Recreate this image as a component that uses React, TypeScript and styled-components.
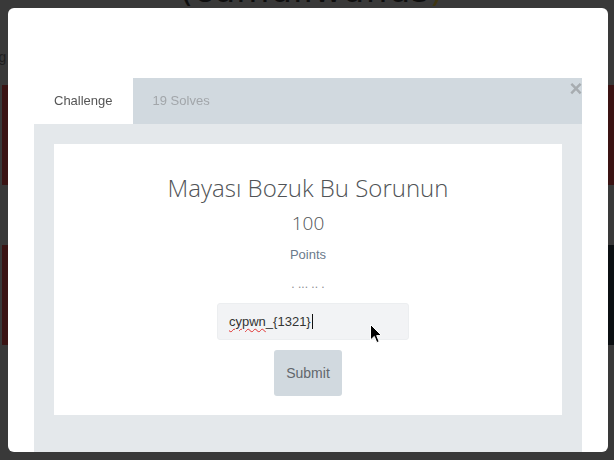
import React from "react";
import styled, { createGlobalStyle } from "styled-components";

const Global = createGlobalStyle`
  html, body { margin: 0; padding: 0; }
  body {
    background: #393939;
    width: 614px;
    height: 460px;
    overflow: hidden;
    font-family: "Liberation Sans", Arial, sans-serif;
  }
`;

/* ---------- backdrop page (already dimmed by the modal overlay) ---------- */
const Page = styled.div`
  display: flex;
  flex-direction: column;
  height: 460px;
  padding-left: 2px;
`;

const LogoBar = styled.div`
  height: 8px;
  overflow: hidden;
  display: flex;
  justify-content: center;
`;

const Logo = styled.div`
  margin-top: -27px;
  margin-left: 8px;
  font-family: "DejaVu Sans", sans-serif;
  font-size: 34px;
  line-height: 34px;
  letter-spacing: 1px;
  color: #0e0e0e;
  & > b {
    color: #3f3510;
    font-weight: 400;
  }
`;

const Nav = styled.div`
  height: 77px;
  box-sizing: border-box;
  padding-top: 41px;
  font-size: 14px;
  line-height: 16px;
  color: #1e1e1e;
  margin-left: -44px;
`;

const CardRow = styled.div<{ $gapTop: number }>`
  display: grid;
  grid-template-columns: 1fr 1fr;
  gap: 8px;
  height: 100px;
  margin-top: ${(p) => p.$gapTop}px;
`;

const Card = styled.div<{ $tone: "red" | "dark" }>`
  background: ${(p) => (p.$tone === "red" ? "#3a1313" : "#0b0f12")};
`;

/* ---------- modal ---------- */
const Modal = styled.div`
  position: fixed;
  top: 8px;
  left: 8px;
  width: 600px;
  height: 444px;
  background: #fff;
  border-radius: 6px;
  overflow: hidden;
  display: flex;
  flex-direction: column;
  padding: 70px 26px 0;
  box-sizing: border-box;
`;

const TabBar = styled.div`
  position: relative;
  display: flex;
  height: 46px;
  background: #d1d9df;
  flex-shrink: 0;
`;

const Tab = styled.div<{ $active?: boolean }>`
  padding: 0 20px;
  line-height: 46px;
  font-size: 13px;
  color: ${(p) => (p.$active ? "#555" : "#a2a6aa")};
  background: ${(p) => (p.$active ? "#fff" : "transparent")};
`;

const Close = styled.div`
  position: absolute;
  right: -1px;
  top: 0;
  width: 14px;
  text-align: center;
  font-family: "Liberation Sans", Arial, sans-serif;
  font-weight: 700;
  font-size: 22px;
  line-height: 22px;
  color: #a7acb0;
`;

const TabBody = styled.div`
  flex: 1;
  background: #e4e8eb;
  padding: 20px;
`;

const Panel = styled.div`
  position: relative;
  background: #fff;
  display: flex;
  flex-direction: column;
  align-items: center;
  padding: 30px 0 19px;
`;

const Title = styled.h3`
  margin: 0;
  font-family: "Open Sans", sans-serif;
  font-weight: 300;
  font-size: 24px;
  line-height: 28.8px;
  color: #505356;
`;

const Value = styled.div`
  margin-top: 9px;
  font-family: "Open Sans", sans-serif;
  font-weight: 300;
  font-size: 19px;
  line-height: 22.8px;
  color: #505356;
`;

const Label = styled.div`
  margin-top: 12px;
  font-size: 13px;
  line-height: 15px;
  color: #6b7a8b;
`;

const Desc = styled.div`
  margin-top: 15px;
  font-size: 12px;
  line-height: 14px;
  color: #8a8e92;
  white-space: pre;
`;

const Field = styled.div`
  position: relative;
  margin-top: 12px;
  margin-left: 10px;
  width: 192px;
  height: 37px;
  box-sizing: border-box;
  background: #f2f3f5;
  border: 1px solid #eceef0;
  border-radius: 3px;
  padding-left: 11px;
  display: flex;
  align-items: center;
  font-size: 13px;
  color: #333;
`;

const Misspelled = styled.span`
  text-decoration: underline wavy #e03030;
  text-decoration-thickness: 1px;
  text-underline-offset: 2px;
`;

const Caret = styled.span`
  display: inline-block;
  width: 1px;
  height: 15px;
  background: #111;
  margin-left: 1px;
`;

const Pointer = styled.svg`
  position: absolute;
  left: 152px;
  top: 20px;
`;

const Submit = styled.button`
  margin-top: 10px;
  height: 46px;
  padding: 0 12px;
  border: none;
  border-radius: 3px;
  background: #d1d9df;
  font-family: "Liberation Sans", Arial, sans-serif;
  font-size: 14px;
  color: #62676c;
`;

export default function App() {
  return (
    <>
      <Global />
      <Page>
        <LogoBar>
          <Logo>
            (cumullwuflus<b>)</b>
          </Logo>
        </LogoBar>
        <Nav>Catalog</Nav>
        <CardRow $gapTop={0}>
          <Card $tone="red" />
          <Card $tone="red" />
        </CardRow>
        <CardRow $gapTop={60}>
          <Card $tone="red" />
          <Card $tone="dark" />
        </CardRow>
      </Page>
      <Modal>
        <TabBar>
          <Tab $active>Challenge</Tab>
          <Tab>19 Solves</Tab>
          <Close>×</Close>
        </TabBar>
        <TabBody>
          <Panel>
            <Title>Mayası Bozuk Bu Sorunun</Title>
            <Value>100</Value>
            <Label>Points</Label>
            <Desc>{". ... .. ."}</Desc>
            <Field>
              <Misspelled>cypwn</Misspelled>_{"{1321}"}
              <Caret />
              <Pointer width="13" height="20" viewBox="0 0 13 20">
                <path
                  d="M0.5 0.5 L0.5 16 L4.3 12.4 L6.8 18.6 L9.2 17.6 L6.7 11.6 L11.6 11.6 Z"
                  fill="#000"
                  stroke="#fff"
                  strokeWidth="1"
                  strokeLinejoin="round"
                />
              </Pointer>
            </Field>
            <Submit>Submit</Submit>
          </Panel>
        </TabBody>
      </Modal>
    </>
  );
}
